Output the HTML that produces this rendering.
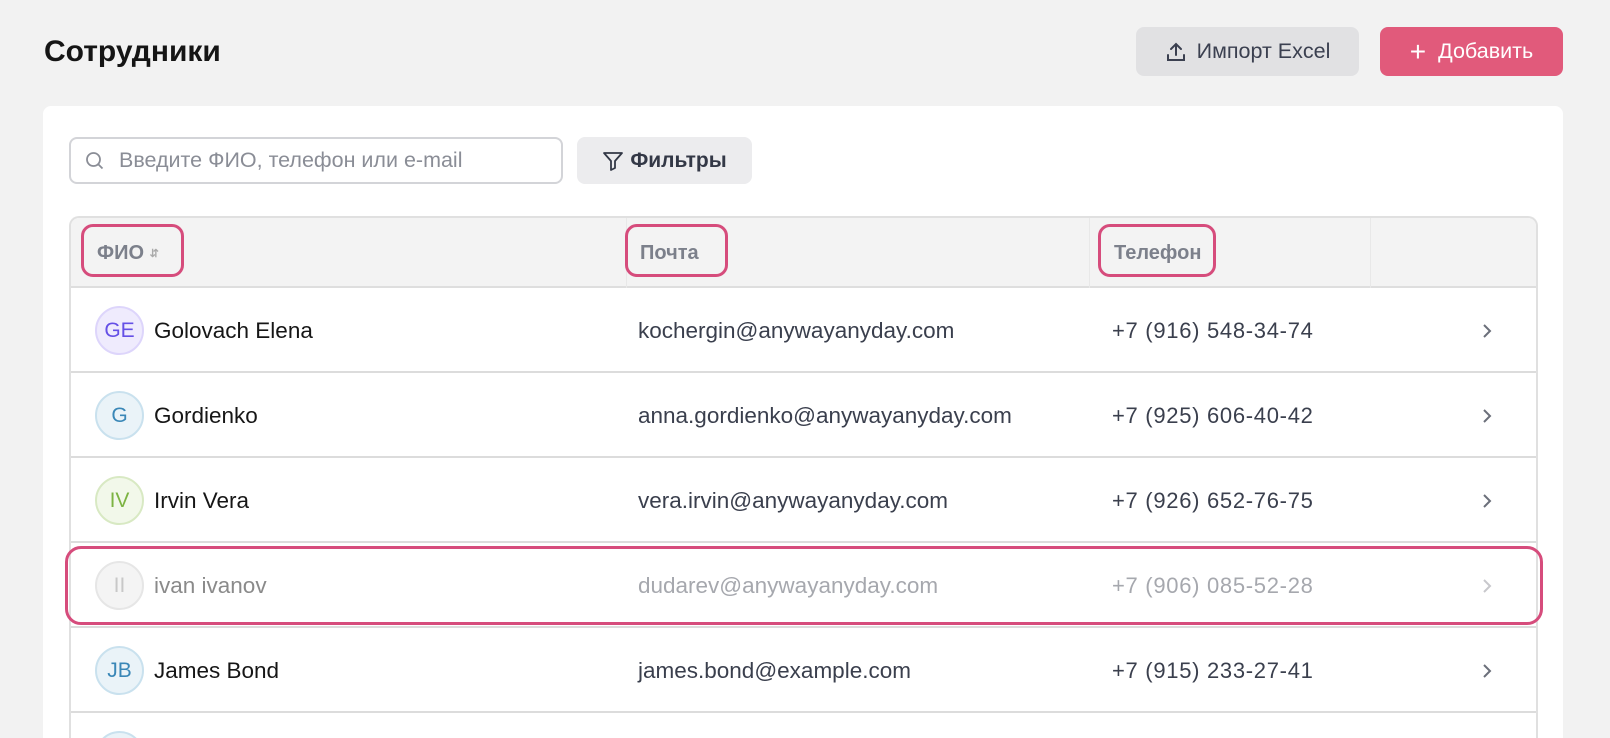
<!DOCTYPE html>
<html><head><meta charset="utf-8"><style>
*{box-sizing:border-box;margin:0;padding:0}
html,body{width:1610px;height:738px;overflow:hidden}
body{background:#f2f2f2;font-family:"Liberation Sans",sans-serif;position:relative}
h1{position:absolute;left:44px;top:35px;font-size:30px;font-weight:bold;color:#151515}
.btn{position:absolute;top:27px;height:49px;border-radius:8px;display:flex;align-items:center;justify-content:center;font-size:21.5px}
.card{position:absolute;left:43px;top:106px;width:1520px;height:632px;background:#fff;border-radius:8px 8px 0 0}
.search{position:absolute;left:69px;top:137px;width:494px;height:47px;border:2px solid #d3d4d8;border-radius:8px;display:flex;align-items:center;padding-left:14px;color:#8a8d96;font-size:21.5px}
.filter{position:absolute;left:577px;top:137px;width:175px;height:47px;background:#ececee;border-radius:8px;display:flex;align-items:center;justify-content:center;font-size:21px;font-weight:bold;color:#333846}
.table{position:absolute;left:69px;top:216px;width:1469px;height:522px;border:2px solid #e0e0e0;border-bottom:none;border-radius:10px 10px 0 0;overflow:hidden}
.head{position:absolute;left:0;top:0;width:100%;height:70px;background:#f3f3f3;border-bottom:2px solid #dedede}
.hc{position:absolute;top:0;height:70px;line-height:70px;font-size:20px;font-weight:bold;color:#7c808b}
.sep{position:absolute;top:0;width:1px;height:70px;background:#e8e8e8}
.row{position:absolute;left:0;width:100%;height:85px;border-bottom:2px solid #dcdcdc;font-size:22.5px;color:#3a3f4d}
.av{position:absolute;left:24px;top:18px;width:49px;height:49px;border-radius:50%;border:2px solid;display:flex;align-items:center;justify-content:center;font-size:21px}
.nm{position:absolute;left:83px;top:0;line-height:85px;color:#161616}
.em{position:absolute;left:567px;line-height:85px}
.ph{position:absolute;left:1041px;line-height:85px;font-size:22px;letter-spacing:0.7px}
.ch{position:absolute;left:1410px;top:34px}
.hl{position:absolute;border:3px solid #d64c7c;border-radius:12px}
</style></head><body>
<h1>Сотрудники</h1>
<div class="btn" style="left:1136px;width:223px;background:#e1e1e3;color:#3b4050"><svg width="22" height="22" viewBox="0 0 22 22" style="margin-right:10px" fill="none" stroke="#3b4050" stroke-width="2" stroke-linecap="round"><path d="M11 14V3M6 8l5-5 5 5M3 14v5h16v-5"/></svg>Импорт Excel</div>
<div class="btn" style="left:1380px;width:183px;background:#e15a7b;color:#fff"><span style="font-size:28px;margin-right:12px;font-weight:300">+</span>Добавить</div>
<div class="card"></div>
<div class="search"><svg width="20" height="20" viewBox="0 0 20 20" fill="none" stroke="#8a8d96" stroke-width="1.8" style="margin-right:14px"><circle cx="8.5" cy="8.5" r="6.5"/><path d="M13.5 13.5l4 4"/></svg>Введите ФИО, телефон или e-mail</div>
<div class="filter"><svg width="22" height="22" viewBox="0 0 22 22" fill="none" stroke="#333846" stroke-width="1.8" stroke-linejoin="round" style="margin-right:6px"><path d="M2 3h18l-7 8v7l-4 2v-9z"/></svg>Фильтры</div>
<div class="table">
<div class="head">
<div class="hc" style="left:26px">ФИО <span style="font-size:11px;color:#aaa;vertical-align:2px">&#8693;</span></div>
<div class="sep" style="left:555px"></div>
<div class="hc" style="left:569px">Почта</div>
<div class="sep" style="left:1018px"></div>
<div class="hc" style="left:1043px">Телефон</div>
<div class="sep" style="left:1299px"></div>
</div>
<div class="row" style="top:70px"><div class="av" style="background:#efebfd;border-color:#ddd5fb;color:#6550e6">GE</div><div class="nm">Golovach Elena</div><div class="em">kochergin@anywayanyday.com</div><div class="ph">+7 (916) 548-34-74</div><svg class="ch" width="12" height="18" viewBox="0 0 12 18" fill="none" stroke="#6b6f7a" stroke-width="2"><path d="M3 3l6 6-6 6"/></svg></div>
<div class="row" style="top:155px"><div class="av" style="background:#eaf3f8;border-color:#c9e1ee;color:#3a87b7">G</div><div class="nm">Gordienko</div><div class="em">anna.gordienko@anywayanyday.com</div><div class="ph">+7 (925) 606-40-42</div><svg class="ch" width="12" height="18" viewBox="0 0 12 18" fill="none" stroke="#6b6f7a" stroke-width="2"><path d="M3 3l6 6-6 6"/></svg></div>
<div class="row" style="top:240px"><div class="av" style="background:#f2f8ea;border-color:#d8e9c3;color:#7cb342">IV</div><div class="nm">Irvin Vera</div><div class="em">vera.irvin@anywayanyday.com</div><div class="ph">+7 (926) 652-76-75</div><svg class="ch" width="12" height="18" viewBox="0 0 12 18" fill="none" stroke="#6b6f7a" stroke-width="2"><path d="M3 3l6 6-6 6"/></svg></div>
<div class="row" style="top:325px;color:#a6a8ae"><div class="av" style="background:#f4f4f4;border-color:#e6e6e6;color:#c8c8c8">II</div><div class="nm" style="color:#8a8a8a">ivan ivanov</div><div class="em">dudarev@anywayanyday.com</div><div class="ph">+7 (906) 085-52-28</div><svg class="ch" width="12" height="18" viewBox="0 0 12 18" fill="none" stroke="#c8c8cc" stroke-width="2"><path d="M3 3l6 6-6 6"/></svg></div>
<div class="row" style="top:410px"><div class="av" style="background:#eaf3f8;border-color:#c9e1ee;color:#3a87b7">JB</div><div class="nm">James Bond</div><div class="em">james.bond@example.com</div><div class="ph">+7 (915) 233-27-41</div><svg class="ch" width="12" height="18" viewBox="0 0 12 18" fill="none" stroke="#6b6f7a" stroke-width="2"><path d="M3 3l6 6-6 6"/></svg></div>
<div class="row" style="top:495px;border-bottom:none;height:27px"><div class="av" style="background:#eaf3f8;border-color:#c9e1ee;color:#3a87b7"></div></div>
</div>
<div class="hl" style="left:81px;top:224px;width:103px;height:53px"></div>
<div class="hl" style="left:625px;top:224px;width:103px;height:53px"></div>
<div class="hl" style="left:1098px;top:224px;width:118px;height:53px"></div>
<div class="hl" style="left:65px;top:546px;width:1478px;height:79px;border-radius:16px"></div>
</body></html>
